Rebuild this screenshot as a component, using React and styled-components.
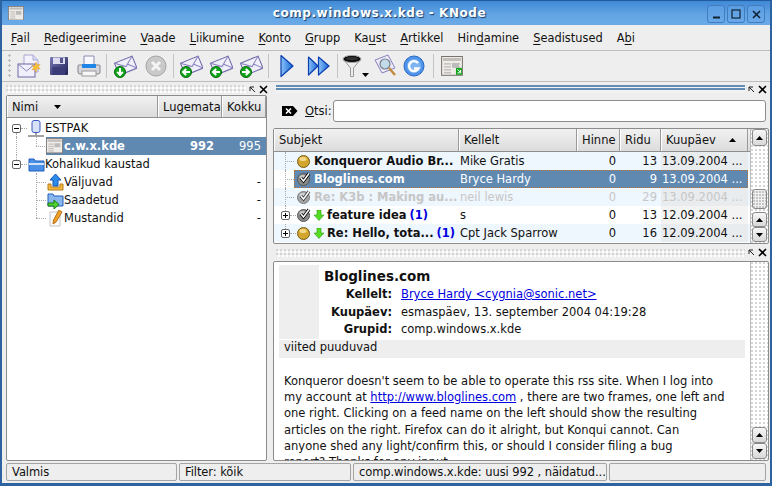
import styled, { createGlobalStyle } from "styled-components";

const GlobalStyle = createGlobalStyle`
  html, body { margin: 0; padding: 0; background: #2a5f9c; }
  * { box-sizing: border-box; }
`;

const FONT = `"DejaVu Sans", Verdana, sans-serif`;
const GRIP = `radial-gradient(circle at 1px 1px, #d6d6d6 1px, transparent 1.2px) 0 0 / 4px 4px,
  radial-gradient(circle at 1px 1px, #ffffff 1px, transparent 1.2px) 2px 2px / 4px 4px`;

const Window = styled.div`
  width: 772px;
  height: 486px;
  overflow: hidden;
  display: flex;
  flex-direction: column;
  background: #eeeeee;
  border: 2px solid #2d63a0;
  border-top: 1px solid #1f5a9c;
  border-bottom-width: 3px;
  font-family: ${FONT};
  font-size: 11px;
  color: #111;
`;

const TitleBar = styled.div`
  height: 24px;
  flex: none;
  position: relative;
  display: flex;
  align-items: center;
  justify-content: center;
  padding-right: 13px;
  background: linear-gradient(#3f89d6, #62a3e3 55%, #6aaae8);
  color: #fff;
  font-weight: bold;
  font-size: 12px;
  letter-spacing: 0.55px;
  text-shadow: 1px 1px 1px #123a6a;
`;

const TitleIcon = styled.div`
  position: absolute;
  left: 6px;
  top: 5px;
`;

const WindowButtons = styled.div`
  position: absolute;
  right: 5px;
  top: 4px;
  display: flex;
  gap: 2px;
`;

const WindowButton = styled.div`
  width: 18px;
  height: 18px;
  border: 1px solid #3f7cc0;
  border-radius: 3px;
  background: linear-gradient(#5b9ee3, #6aa8e8);
  display: flex;
  align-items: center;
  justify-content: center;
`;

const MenuBar = styled.div`
  height: 26px;
  flex: none;
  display: flex;
  align-items: center;
  padding: 0 0 0 9px;
  gap: 14.1px;
  border-bottom: 1px solid #bdbdbd;
  font-size: 11.4px;
`;

const MenuItem = styled.span`
  & u { text-underline-offset: 2px; }
`;

const ToolBar = styled.div`
  height: 31px;
  flex: none;
  display: flex;
  align-items: center;
  padding-left: 6px;
  border-bottom: 1px solid #bdbdbd;
`;

const ToolGrip = styled.div`
  width: 6px;
  height: 24px;
  background: radial-gradient(circle at 1.5px 1.5px, #bbb 1px, transparent 1.3px) 0 0 / 6px 5px;
`;

const ToolButton = styled.div`
  width: ${(p) => p.$w || 30}px;
  height: 26px;
  flex: none;
  display: flex;
  align-items: center;
  justify-content: center;
`;

const ToolSep = styled.div`
  width: 1px;
  height: 24px;
  flex: none;
  margin: 0 ${(p) => p.$gap || 2}px;
  background: #c4c4c4;
`;

const Panes = styled.div`
  flex: 1;
  min-height: 0;
  display: grid;
  grid-template-columns: 267px 1fr;
  gap: 3px;
  padding: 1px 1px 2px 1px;
`;

const Column = styled.div`
  display: flex;
  flex-direction: column;
  min-height: 0;
  min-width: 0;
`;

const DockHandle = styled.div`
  height: ${(p) => p.$h || 12}px;
  flex: none;
  display: flex;
  align-items: center;
  justify-content: flex-end;
  gap: 3px;
  padding: 0 2px 0 0;
`;

const DockFill = styled.div`
  flex: 1;
  height: 8px;
  margin-left: 3px;
  background: ${(p) =>
    p.$active
      ? "linear-gradient(#5f8bb5 0 2px, #f2f2f2 2px 3px, #5f8bb5 3px 5px, #f2f2f2 5px)"
      : GRIP};
`;

const Frame = styled.div`
  flex: ${(p) => (p.$fill ? 1 : "none")};
  height: ${(p) => (p.$h ? `${p.$h}px` : "auto")};
  min-height: 0;
  margin: 0 ${(p) => p.$mx ?? 3}px;
  position: relative;
  overflow: hidden;
  background: #fff;
  border: 1px solid #8c8c8c;
  border-radius: 2px;
`;

const Header = styled.div`
  height: ${(p) => p.$h || 22}px;
  display: grid;
  grid-template-columns: ${(p) => p.$cols};
  background: linear-gradient(#f1f1f1, #dcdcdc);
  border-bottom: 1px solid #8f8f8f;
`;

const HeaderCell = styled.div`
  display: flex;
  align-items: center;
  justify-content: ${(p) => (p.$start ? "flex-start" : "space-between")};
  gap: ${(p) => (p.$start ? 16 : 0)}px;
  padding: ${(p) => (p.$start || p.$low ? 1 : 0)}px ${(p) => p.$pr ?? 4}px 0 4px;
  border-right: 1px solid #999;
  border-left: 1px solid #fff;
  font-size: 11.5px;
  white-space: nowrap;
  overflow: hidden;
`;

const TreeRow = styled.div`
  height: 18px;
  display: flex;
  align-items: center;
  position: relative;
  padding-left: ${(p) => p.$indent}px;
  font-size: 11.5px;
  white-space: nowrap;
`;

const TreeBody = styled.div`
  padding-top: 1px;
  position: relative;
`;

const TreeSelected = styled.div`
  display: flex;
  flex: 1;
  align-items: center;
  gap: 1px;
  height: 18px;
  background: #6089b2;
  color: #fff;
  font-weight: bold;
`;

const TreeName = styled.span`
  flex: 1;
`;

const TreeCount = styled.span`
  width: ${(p) => p.$w}px;
  text-align: right;
  padding-right: ${(p) => p.$pr || 5}px;
  font-weight: ${(p) => (p.$bold ? "bold" : "normal")};
`;

const Connector = styled.span`
  position: absolute;
  left: ${(p) => p.$x}px;
  top: ${(p) => p.$top ?? 9}px;
  width: ${(p) => p.$w ?? 0}px;
  height: ${(p) => p.$h ?? 0}px;
  border-top: ${(p) => (p.$w ? "1px dotted #aaa" : "none")};
  border-left: ${(p) => (p.$h ? "1px dotted #aaa" : "none")};
`;

const ExpandBox = styled.span`
  position: absolute;
  left: ${(p) => p.$x}px;
  top: 5px;
  width: 9px;
  height: 9px;
  background: #fff;
  border: 1px solid #666;
  border-radius: 2px;
  &::before {
    content: "";
    position: absolute;
    left: 1px;
    top: 3px;
    width: 5px;
    height: 1px;
    background: #000;
  }
  &::after {
    content: "";
    display: ${(p) => (p.$closed ? "block" : "none")};
    position: absolute;
    left: 3px;
    top: 1px;
    width: 1px;
    height: 5px;
    background: #000;
  }
`;

const SearchBar = styled.div`
  height: 33px;
  flex: none;
  display: flex;
  align-items: center;
  padding: 0 3px 1px 9px;
  font-size: 11.5px;
`;

const SearchLabel = styled.span`
  margin: 0 1px 0 7px;
`;

const SearchInput = styled.div`
  flex: 1;
  height: 22px;
  background: #fff;
  border: 1px solid #8c8c8c;
  border-radius: 3px;
`;

const ListWrap = styled.div`
  display: flex;
  height: 100%;
`;

const ListMain = styled.div`
  flex: 1;
  min-width: 0;
`;

const ArticleRow = styled.div`
  height: 18px;
  display: grid;
  grid-template-columns: 185px 118px 43px 41px 87px;
  align-items: center;
  font-size: 11.5px;
  white-space: nowrap;
  background: ${(p) => (p.$alt ? "#eef6fe" : "#fff")};
  color: ${(p) => (p.$faded ? "#c6c6c6" : "#111")};
`;

const SubjectCell = styled.div`
  position: relative;
  height: 18px;
  display: flex;
  align-items: center;
  gap: 3px;
  padding-left: 23px;
  font-weight: bold;
  overflow: hidden;
`;

const ThreadCount = styled.span`
  color: #0000e0;
  margin-left: 3px;
`;

const Cell = styled.div`
  height: 18px;
  display: flex;
  align-items: center;
  justify-content: ${(p) => (p.$right ? "flex-end" : "flex-start")};
  padding: 0 ${(p) => (p.$right ? 4 : 0)}px 0 ${(p) => (p.$right ? 0 : 1)}px;
  overflow: hidden;
`;

const DateCell = styled(Cell)`
  background: ${(p) => (p.$alt ? "#e9ecef" : "#f3f3f3")};
  padding-left: 1px;
`;

const SelectedBand = styled.div`
  position: absolute;
  left: 20px;
  right: 20px;
  top: 41px;
  height: 18px;
  display: grid;
  grid-template-columns: 165px 118px 43px 41px 87px;
  align-items: center;
  background: #6089b2;
  color: #fff;
  outline: 1px dotted #b8733a;
  outline-offset: -1px;
  font-size: 11.5px;
  white-space: nowrap;
`;

const SelectedSubject = styled.div`
  display: flex;
  align-items: center;
  gap: 3px;
  font-weight: bold;
  padding-left: 3px;
`;

const ScrollBar = styled.div`
  width: 18px;
  flex: none;
  display: flex;
  flex-direction: column;
  border-left: 1px solid #bbb;
  background: ${GRIP};
  padding: 0 1px 1px 1px;
`;

const ScrollButton = styled.div`
  height: ${(p) => p.$h || 16}px;
  flex: none;
  display: flex;
  align-items: center;
  justify-content: center;
  border: 1px solid #8a8a8a;
  border-radius: 3px;
  background: linear-gradient(#f7f7f7, #d8d8d8);
`;

const ScrollHandle = styled(ScrollButton)`
  margin-bottom: 3px;
  background: radial-gradient(circle at 1px 1px, #c4c4c4 0.7px, transparent 1px) 3px 4px / 3px 3px, #f0f0f0;
`;

const ScrollGap = styled.div`
  flex: 1;
`;

const ReaderWrap = styled.div`
  display: flex;
  height: 100%;
`;

const Reader = styled.div`
  flex: 1;
  min-width: 0;
  padding: 3px 5px 0 5px;
  overflow: hidden;
`;

const ReaderHead = styled.div`
  display: flex;
  height: 74px;
`;

const FacePlaceholder = styled.div`
  width: 40px;
  flex: none;
  background: #eeeeee;
  margin-right: 5px;
`;

const ReaderTitle = styled.div`
  font-size: 13.5px;
  font-weight: bold;
  height: 20px;
  line-height: 22px;
`;

const MetaRow = styled.div`
  display: grid;
  grid-template-columns: 68px 1fr;
  column-gap: 9px;
  height: 17.5px;
  line-height: 18px;
  font-size: 11.5px;
`;

const MetaLabel = styled.span`
  font-weight: bold;
  text-align: right;
`;

const MetaLink = styled.a`
  color: #0000e0;
  text-decoration: underline;
`;

const RefBar = styled.div`
  height: 18px;
  margin-top: 1px;
  line-height: 15px;
  padding-left: 5px;
  background: #eeeeee;
  font-size: 11.5px;
`;

const BodyText = styled.div`
  margin: 15px 0 0 5px;
  font-size: 11.5px;
  line-height: 16.2px;
  white-space: nowrap;
`;

const StatusBar = styled.div`
  height: 20px;
  flex: none;
  display: grid;
  grid-template-columns: 171px 172px 254px 157px;
  gap: 2px;
  padding: 0 3px 0 4px;
`;

const StatusCell = styled.div`
  border: 1px solid #a4a4a4;
  border-radius: 2px;
  height: 18px;
  line-height: 16px;
  padding-left: 5px;
  font-size: 11.5px;
  letter-spacing: -0.08px;
  white-space: nowrap;
  overflow: hidden;
`;

/* ---- drawings ---- */

const Envelope = ({ badge }) => (
  <svg width="24" height="24" viewBox="0 0 24 24">
    <g transform="rotate(-22 13 11)">
      <rect x="3" y="5" width="19" height="13" fill="#f1eff9" stroke="#6c68a8" />
      <path d="M3 5 L12.5 12.5 L22 5 M3 18 L10 11 M22 18 L15 11" fill="none" stroke="#8884bd" />
    </g>
    <circle cx="7" cy="18" r="5.5" fill="#0fa51a" stroke="#056b0c" />
    {badge === "down" && <path d="M7 14v7M4.2 17.8 7 21l2.8-3.2" fill="none" stroke="#fff" strokeWidth="2" />}
    {badge === "left" && <path d="M11 18H4M7.2 15 4 18l3.2 3" fill="none" stroke="#fff" strokeWidth="2" />}
    {badge === "right" && <path d="M3 18h7M6.8 15 10 18l-3.2 3" fill="none" stroke="#fff" strokeWidth="2" />}
  </svg>
);

const NewMail = () => (
  <svg width="24" height="24" viewBox="0 0 24 24">
    <path d="M7 1h9l5 5v12H7z" fill="#f4f3fb" stroke="#a9a6d4" />
    <path d="M16 1v5h5" fill="#dcdaf0" stroke="#a9a6d4" />
    <rect x="1" y="10" width="17" height="13" fill="#f1eff9" stroke="#6c68a8" />
    <path d="M1 10l8.5 7L18 10" fill="none" stroke="#8884bd" />
    <path d="M19 8l1.2 3 3-.8-2 2.4 2 2.4-3-.8L19 18l-1.2-2.8-3 .8 2-2.4-2-2.4 3 .8z" fill="#f5c33a" stroke="#e89a1c" strokeWidth=".5" />
  </svg>
);

const Floppy = () => (
  <svg width="20" height="20" viewBox="0 0 20 20">
    <defs>
      <linearGradient id="fl" x1="0" y1="0" x2="1" y2="1">
        <stop offset="0" stopColor="#7a7bb8" />
        <stop offset="1" stopColor="#1d1f52" />
      </linearGradient>
    </defs>
    <path d="M1 2a1 1 0 0 1 1-1h16a1 1 0 0 1 1 1v16a1 1 0 0 1-1 1H2a1 1 0 0 1-1-1z" fill="url(#fl)" />
    <rect x="4" y="1.5" width="12" height="6.5" fill="#dcdcee" />
    <rect x="3.5" y="11" width="13" height="8" fill="#3c3d78" />
    <rect x="11" y="2" width="3" height="5" fill="#555690" />
  </svg>
);

const Printer = () => (
  <svg width="24" height="22" viewBox="0 0 24 22">
    <path d="M7 1h10v9H7z" fill="#f8f8ff" stroke="#8b8bb0" />
    <path d="M2 10h20a1 1 0 0 1 1 1v6a2 2 0 0 1-2 2H3a2 2 0 0 1-2-2v-6a1 1 0 0 1 1-1z" fill="#d6d6dc" stroke="#85858d" />
    <rect x="5" y="9" width="14" height="4" fill="#1f86e8" />
    <rect x="5" y="16" width="14" height="5" fill="#f7f7f7" stroke="#9a9a9a" />
  </svg>
);

const StopCircle = () => (
  <svg width="22" height="22" viewBox="0 0 22 22">
    <circle cx="11" cy="11" r="10" fill="#c9c9c9" stroke="#a3a3a3" />
    <path d="M7 7l8 8M15 7l-8 8" stroke="#f4f4f4" strokeWidth="3" />
  </svg>
);

const PlayArrow = ({ double }) => (
  <svg width={double ? 24 : 16} height="24" viewBox={double ? "0 0 24 24" : "0 0 16 24"}>
    <defs>
      <linearGradient id="pl" x1="0" y1="0" x2="1" y2="0">
        <stop offset="0" stopColor="#8cc2f7" />
        <stop offset="1" stopColor="#1668d8" />
      </linearGradient>
    </defs>
    <path d={double ? "M1.5 3 11 12 1.5 21z" : "M2 1.5 14 12 2 22.5z"} fill="url(#pl)" stroke="#0b3fb0" strokeWidth="1.2" strokeLinejoin="round" />
    {double && <path d="M11.5 3 22 12 11.5 21z" fill="url(#pl)" stroke="#0b3fb0" strokeWidth="1.2" strokeLinejoin="round" />}
  </svg>
);

const Funnel = () => (
  <svg width="28" height="24" viewBox="0 0 28 24">
    <path d="M2 6 8.5 14v8.5h3V14l6.5-8" fill="#eee" stroke="#999" />
    <ellipse cx="10" cy="5" rx="9" ry="3.6" fill="#111" stroke="#aaa" />
    <ellipse cx="10" cy="4.6" rx="6" ry="1.6" fill="#333" />
    <path d="M20 19h7l-3.5 4z" fill="#000" />
  </svg>
);

const Magnifier = () => (
  <svg width="24" height="24" viewBox="0 0 24 24">
    <path d="M1 6 14 1l7 13-13 5z" fill="#ebe8f8" stroke="#8884bd" />
    <circle cx="11" cy="10" r="5" fill="#c3dbe9" stroke="#77808c" strokeWidth="1.2" />
    <path d="M15 14l6 7" stroke="#c18a3c" strokeWidth="2.4" />
  </svg>
);

const Reload = () => (
  <svg width="22" height="22" viewBox="0 0 22 22">
    <circle cx="11" cy="11" r="10" fill="#4f94ea" stroke="#2a68c4" />
    <circle cx="11" cy="11" r="7" fill="#7fb4f2" />
    <path d="M15 8a5 5 0 1 0 .5 5.5H11" fill="none" stroke="#fff" strokeWidth="2.4" />
  </svg>
);

const NewsPage = ({ size = 22, green }) => (
  <svg width={size} height={size * 0.9} viewBox="0 0 22 20">
    <rect x=".5" y=".5" width="21" height="19" fill="#efebe6" stroke="#77706c" />
    <rect x="2" y="2" width="18" height="3" fill="#a59f9c" opacity=".6" />
    <path d="M3 8h7M3 11h7M3 14h7M3 17h7M12 8h7M12 11h7" stroke="#aaa" />
    <rect x="11" y="7" width="7" height="5" fill="#bbb" />
    {green && <path d="M15 12h6v7h-6z" fill="#0fa51a" />}
    {green && <path d="M16.5 13.5l3 3M19.5 14v3h-3" stroke="#fff" fill="none" />}
  </svg>
);

const CloseGlyph = ({ color = "#000", size = 9 }) => (
  <svg width={size} height={size} viewBox="0 0 9 9">
    <path d="M1 1l7 7M8 1 1 8" stroke={color} strokeWidth="1.6" />
  </svg>
);

const UndockGlyph = () => (
  <svg width="7" height="7" viewBox="0 0 7 7">
    <path d="M1 5V1h4M1 1l5 5" fill="none" stroke="#222" />
  </svg>
);

const Tri = ({ up, w = 7 }) => (
  <svg width={w} height="4" viewBox="0 0 7 4">
    <path d={up ? "M0 4 3.5 0 7 4z" : "M0 0h7L3.5 4z"} fill="#000" />
  </svg>
);

const ServerIcon = () => (
  <svg width="17" height="17" viewBox="0 0 17 17">
    <rect x="4" y="0.5" width="8" height="12" rx="2" fill="#d8e2f6" stroke="#3c58c0" />
    <path d="M8 13v2M0 16h16" stroke="#444" />
  </svg>
);

const FolderIcon = () => (
  <svg width="17" height="16" viewBox="0 0 17 16">
    <path d="M1 3h5l1.5 2H16v10H1z" fill="#4a90e6" stroke="#1f5fbf" />
    <path d="M1 7h15v2H1z" fill="#cfe4fb" />
  </svg>
);

const OutboxIcon = () => (
  <svg width="17" height="17" viewBox="0 0 17 17">
    <path d="M1 10v6h15v-6h-3v3H4v-3z" fill="#f2b83e" stroke="#b97d1d" />
    <path d="M8.5 0 14 6h-3v6H6V6H3z" fill="#2f8bea" stroke="#1356b6" />
  </svg>
);

const SentIcon = () => (
  <svg width="17" height="17" viewBox="0 0 17 17">
    <path d="M1 2h5l1 2h9v10H1z" fill="#8ab6ee" stroke="#1f5fbf" />
    <path d="M1 11h6V8l5 4.5L7 17v-3H1z" fill="#4fd132" stroke="#1b7d12" />
  </svg>
);

const DraftIcon = () => (
  <svg width="17" height="17" viewBox="0 0 17 17">
    <path d="M3 2h10v14H3z" fill="#fbfbfb" stroke="#c4c4c4" />
    <path d="M12 0l3 2-6 10-3 2 .5-4z" fill="#f0a128" stroke="#b96d12" />
  </svg>
);

const Ball = ({ read, faded }) => (
  <svg width="14" height="14" viewBox="0 0 14 14" style={faded ? { opacity: 0.75 } : undefined}>
    <circle cx="6.5" cy="7.5" r="6" fill={read ? "#8a8a8a" : "#d2a52f"} stroke={read ? "#555" : "#7a5c10"} />
    <ellipse cx="6" cy="5" rx="3.6" ry="2" fill={read ? "#c8c8c8" : "#f2d98a"} />
    {read && <path d="M4 6l2.5 3L12 1.5" fill="none" stroke="#000" strokeWidth="3.2" />}
    {read && <path d="M4 6l2.5 3L12 1.5" fill="none" stroke="#fff" strokeWidth="1.5" />}
  </svg>
);

const GreenDown = () => (
  <svg width="10" height="11" viewBox="0 0 10 11">
    <path d="M3 0h4v5h3L5 10.5 0 5h3z" fill="#55dd22" stroke="#2e9a10" strokeWidth=".6" />
  </svg>
);

const ClearSearch = () => (
  <svg width="16" height="12" viewBox="0 0 16 12">
    <path d="M0 1h11l4.5 5-4.5 5H0z" fill="#000" />
    <path d="M4 3.5l5 5M9 3.5l-5 5" stroke="#fff" strokeWidth="1.6" />
  </svg>
);

/* ---- data ---- */

const menus = [
  ["F", "ail"], ["R", "edigeerimine"], ["V", "aade"], ["L", "iikumine"], ["K", "onto"], ["G", "rupp"],
];

const articles = [
  { id: 1, subject: "Konqueror Audio Br...", from: "Mike Gratis", lines: 13, date: "13.09.2004 ...", alt: true },
  { id: 2, subject: "Bloglines.com", from: "Bryce Hardy", lines: 9, date: "13.09.2004 ...", read: true, alt: false, selected: true },
  { id: 3, subject: "Re: K3b : Making au...", from: "neil lewis", lines: 29, date: "13.09.2004 ...", read: true, faded: true, alt: true },
  { id: 4, subject: "feature idea", count: "(1)", from: "s", lines: 13, date: "12.09.2004 ...", read: true, thread: true },
  { id: 5, subject: "Re: Hello, tota...", count: "(1)", from: "Cpt Jack Sparrow", lines: 16, date: "12.09.2004 ...", thread: true, alt: true },
];

const bodyLines = [
  "Konqueror doesn't seem to be able to operate this rss site. When I log into",
  null,
  "one right. Clicking on a feed name on the left should show the resulting",
  "articles on the right. Firefox can do it alright, but Konqui cannot. Can",
  "anyone shed any light/confirm this, or should I consider filing a bug",
  "report? Thanks for any input",
];

const Handle = ({ active, h }) => (
  <DockHandle $h={h}>
    <DockFill $active={active} />
    <UndockGlyph />
    <CloseGlyph />
  </DockHandle>
);

const ArticleList = () => (
  <ListMain>
    <Header $h={23} $cols="185px 118px 43px 41px 87px">
      <HeaderCell>Subjekt</HeaderCell>
      <HeaderCell>Kellelt</HeaderCell>
      <HeaderCell>Hinne</HeaderCell>
      <HeaderCell>Ridu</HeaderCell>
      <HeaderCell $pr={11}>Kuupäev <Tri up /></HeaderCell>
    </Header>
    {articles.map((a) => (
      <ArticleRow key={a.id} $alt={a.alt} $faded={a.faded}>
        <SubjectCell>
          {a.thread && <ExpandBox $x={7} $closed />}
          <Connector $x={11} $top={0} $h={a.thread ? 5 : 18} />
          <Connector $x={a.thread ? 16 : 11} $w={a.thread ? 6 : 9} />
          <Ball read={a.read} faded={a.faded} />
          {a.thread && <GreenDown />}
          <span>
            {a.subject}
            {a.count && <ThreadCount>{a.count}</ThreadCount>}
          </span>
        </SubjectCell>
        <Cell>{a.from}</Cell>
        <Cell $right>0</Cell>
        <Cell $right>{a.lines}</Cell>
        <DateCell $alt={a.alt}>{a.date}</DateCell>
      </ArticleRow>
    ))}
    <SelectedBand>
      <SelectedSubject>
        <Ball read />
        <span>Bloglines.com</span>
      </SelectedSubject>
      <Cell>Bryce Hardy</Cell>
      <Cell $right>0</Cell>
      <Cell $right>9</Cell>
      <Cell>13.09.2004 ...</Cell>
    </SelectedBand>
  </ListMain>
);

export default function App() {
  return (
    <>
      <GlobalStyle />
      <Window>
        <TitleBar>
          <TitleIcon><NewsPage size={16} /></TitleIcon>
          comp.windows.x.kde - KNode
          <WindowButtons>
            <WindowButton>
              <svg width="9" height="9" viewBox="0 0 9 9"><path d="M1 7.5h7" stroke="#123" strokeWidth="2" /></svg>
            </WindowButton>
            <WindowButton>
              <svg width="10" height="10" viewBox="0 0 10 10"><rect x="1" y="1" width="8" height="8" fill="none" stroke="#123" strokeWidth="1.2" /></svg>
            </WindowButton>
            <WindowButton><CloseGlyph color="#123" /></WindowButton>
          </WindowButtons>
        </TitleBar>

        <MenuBar>
          {menus.map(([k, rest]) => (
            <MenuItem key={k}><u>{k}</u>{rest}</MenuItem>
          ))}
          <MenuItem>Ka<u>u</u>st</MenuItem>
          <MenuItem><u>A</u>rtikkel</MenuItem>
          <MenuItem>Hin<u>d</u>amine</MenuItem>
          <MenuItem><u>S</u>eadistused</MenuItem>
          <MenuItem>A<u>b</u>i</MenuItem>
        </MenuBar>

        <ToolBar>
          <ToolGrip />
          <ToolButton><NewMail /></ToolButton>
          <ToolButton><Floppy /></ToolButton>
          <ToolButton><Printer /></ToolButton>
          <ToolSep />
          <ToolButton $w={32}><Envelope badge="down" /></ToolButton>
          <ToolButton><StopCircle /></ToolButton>
          <ToolSep />
          <ToolButton><Envelope badge="left" /></ToolButton>
          <ToolButton><Envelope badge="left" /></ToolButton>
          <ToolButton><Envelope badge="right" /></ToolButton>
          <ToolSep />
          <ToolButton $w={32}><PlayArrow /></ToolButton>
          <ToolButton $w={32}><PlayArrow double /></ToolButton>
          <ToolSep />
          <ToolButton $w={32}><Funnel /></ToolButton>
          <ToolButton $w={28}><Magnifier /></ToolButton>
          <ToolButton $w={28}><Reload /></ToolButton>
          <ToolSep $gap={5} />
          <ToolButton $w={26}><NewsPage green /></ToolButton>
        </ToolBar>

        <Panes>
          <Column>
            <Handle />
            <Frame $fill>
              <Header $cols="151px 64px 1fr">
                <HeaderCell $start>Nimi <Tri /></HeaderCell>
                <HeaderCell $low>Lugemata</HeaderCell>
                <HeaderCell $low>Kokku</HeaderCell>
              </Header>
              <TreeBody>
                <TreeRow $indent={21}>
                  <ExpandBox $x={5} />
                  <Connector $x={14} $w={6} />
                  <Connector $x={9} $top={14} $h={4} />
                  <ServerIcon />
                  <TreeName>ESTPAK</TreeName>
                </TreeRow>
                <TreeRow $indent={39}>
                  <Connector $x={9} $top={0} $h={18} />
                  <Connector $x={29} $top={0} $h={9} />
                  <Connector $x={29} $w={9} />
                  <TreeSelected>
                    <NewsPage size={17} />
                    <TreeName>c.w.x.kde</TreeName>
                    <TreeCount $w={64} $pr={7} $bold>992</TreeCount>
                    <TreeCount $w={44}>995</TreeCount>
                  </TreeSelected>
                </TreeRow>
                <TreeRow $indent={21}>
                  <Connector $x={9} $top={0} $h={5} />
                  <ExpandBox $x={5} />
                  <Connector $x={14} $w={6} />
                  <FolderIcon />
                  <TreeName>Kohalikud kaustad</TreeName>
                </TreeRow>
                {[["Väljuvad", <OutboxIcon key="o" />], ["Saadetud", <SentIcon key="s" />], ["Mustandid", <DraftIcon key="d" />]].map(([name, icon], i) => (
                  <TreeRow key={name} $indent={40}>
                    <Connector $x={29} $top={0} $h={i === 2 ? 9 : 18} />
                    <Connector $x={29} $w={10} />
                    {icon}
                    <TreeName>{name}</TreeName>
                    <TreeCount $w={44}>-</TreeCount>
                  </TreeRow>
                ))}
              </TreeBody>
            </Frame>
          </Column>

          <Column>
            <Handle active />
            <SearchBar>
              <ClearSearch />
              <SearchLabel><u>O</u>tsi:</SearchLabel>
              <SearchInput />
            </SearchBar>
            <Frame $h={116} $mx={0}>
              <ListWrap>
                <ArticleList />
                <ScrollBar>
                  <ScrollButton $h={17}><Tri up /></ScrollButton>
                  <ScrollGap />
                  <ScrollHandle $h={20} />
                  <ScrollButton $h={15}><Tri up /></ScrollButton>
                  <ScrollButton $h={15}><Tri /></ScrollButton>
                </ScrollBar>
              </ListWrap>
            </Frame>
            <Handle h={17} />
            <Frame $fill $mx={0}>
              <ReaderWrap>
                <Reader>
                  <ReaderHead>
                    <FacePlaceholder />
                    <div>
                      <ReaderTitle>Bloglines.com</ReaderTitle>
                      <MetaRow>
                        <MetaLabel>Kellelt:</MetaLabel>
                        <span><MetaLink>Bryce Hardy &lt;cygnia@sonic.net&gt;</MetaLink></span>
                      </MetaRow>
                      <MetaRow>
                        <MetaLabel>Kuupäev:</MetaLabel>
                        <span>esmaspäev, 13. september 2004 04:19:28</span>
                      </MetaRow>
                      <MetaRow>
                        <MetaLabel>Grupid:</MetaLabel>
                        <span>comp.windows.x.kde</span>
                      </MetaRow>
                    </div>
                  </ReaderHead>
                  <RefBar>viited puuduvad</RefBar>
                  <BodyText>
                    {bodyLines.map((line, i) =>
                      line === null ? (
                        <div key={i}>my account at <MetaLink>http://www.bloglines.com</MetaLink> , there are two frames, one left and</div>
                      ) : (
                        <div key={i}>{line}</div>
                      )
                    )}
                  </BodyText>
                </Reader>
                <ScrollBar>
                  <ScrollGap />
                  <ScrollButton $h={16}><Tri up /></ScrollButton>
                  <ScrollButton $h={16}><Tri /></ScrollButton>
                </ScrollBar>
              </ReaderWrap>
            </Frame>
          </Column>
        </Panes>

        <StatusBar>
          <StatusCell>Valmis</StatusCell>
          <StatusCell>Filter: kõik</StatusCell>
          <StatusCell>comp.windows.x.kde: uusi 992 , näidatud...</StatusCell>
          <StatusCell />
        </StatusBar>
      </Window>
    </>
  );
}
